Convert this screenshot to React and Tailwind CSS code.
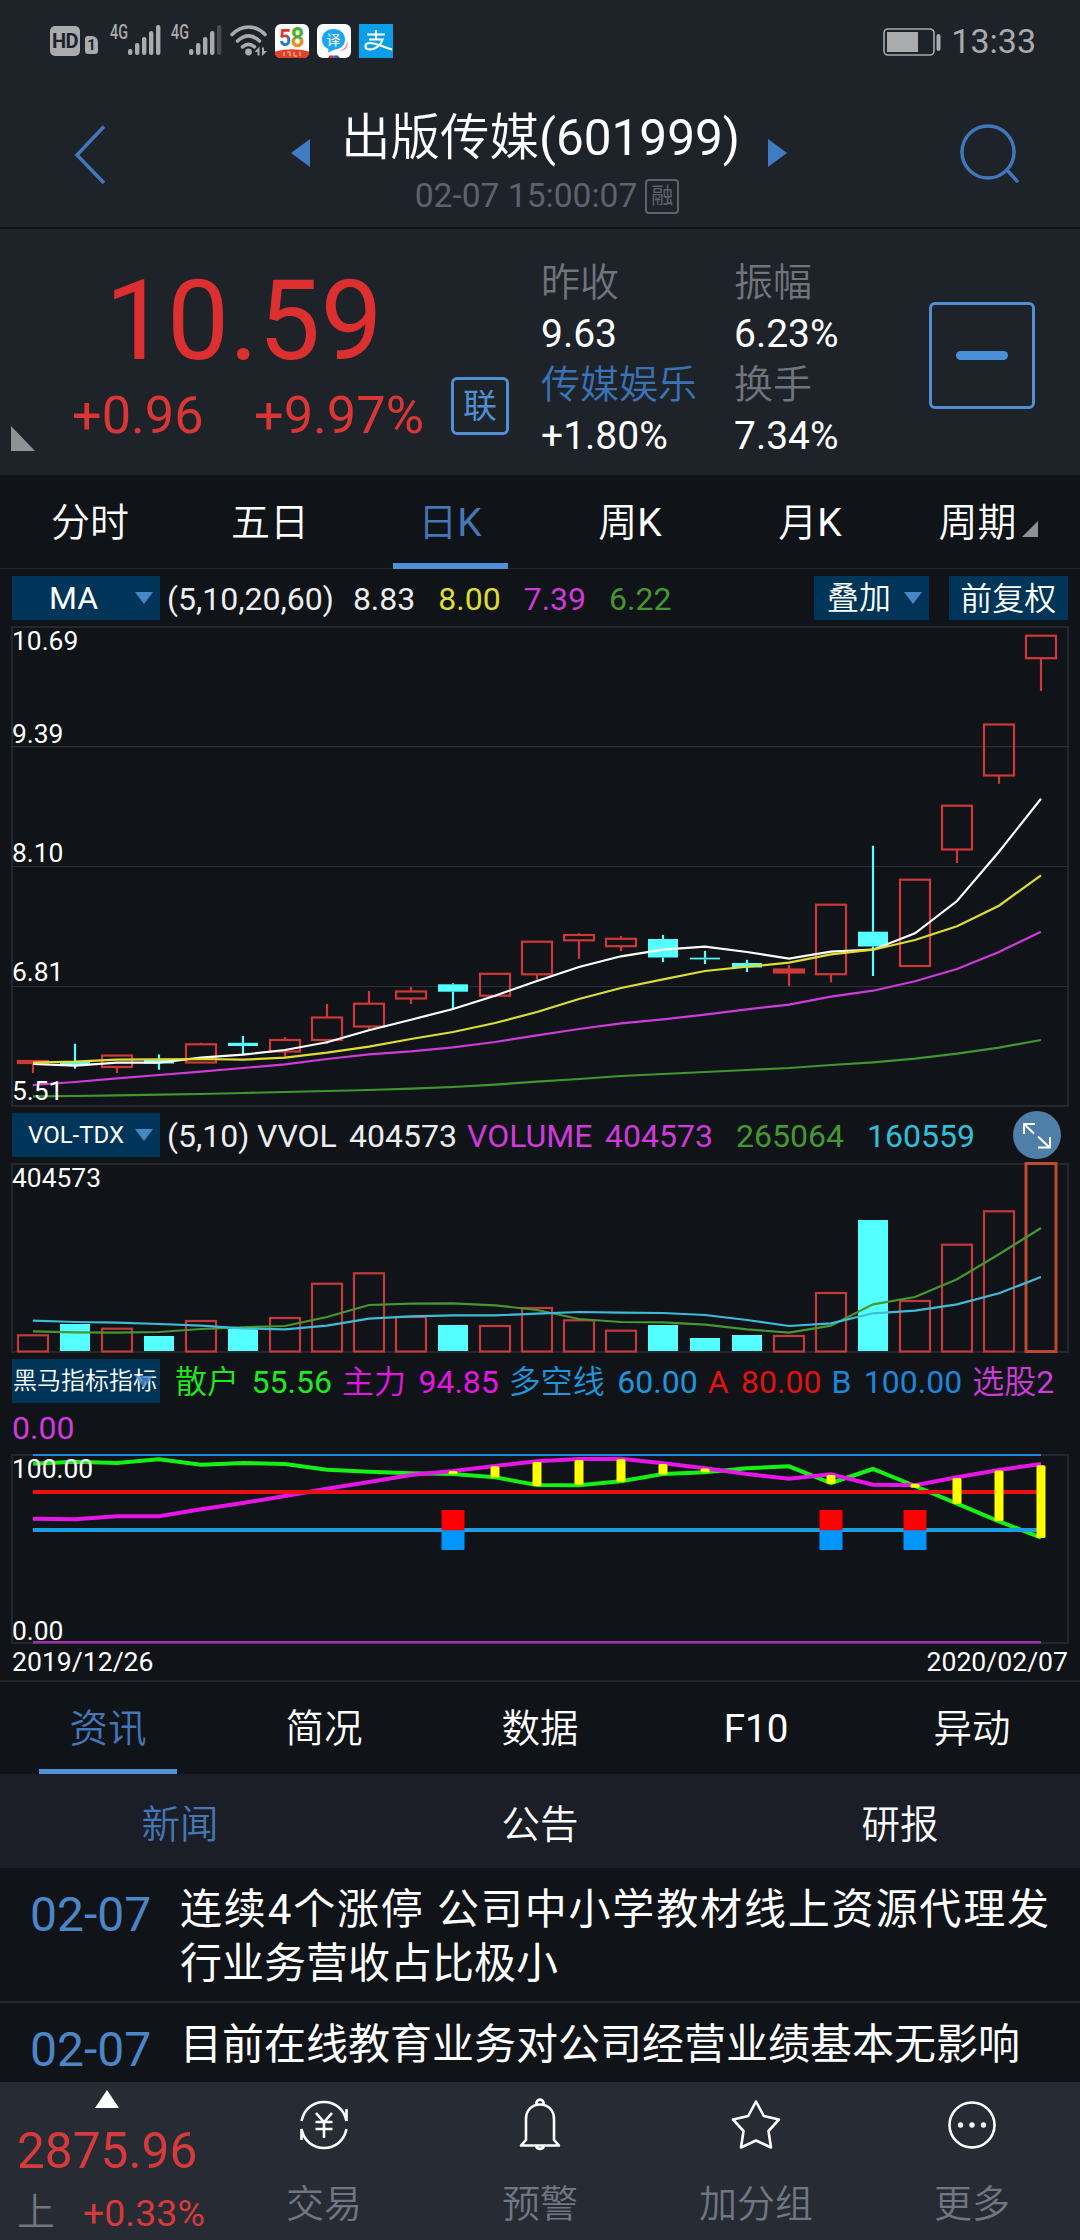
import React from "react";

const RED = "#cf3838";
const CYAN = "#54ffff";
const GRID = "#24272c";

const FIRST_X = 33;
const STEP = 42;
const cx = (i) => FIRST_X + STEP * i;

// [up, bodyTop, bodyBottom, high, low]
const candles = [
  [1, 1061, 1063, 1061, 1073],
  [0, 1061.5, 1065, 1043.7, 1068.7],
  [1, 1055.5, 1067, 1055, 1073],
  [0, 1060, 1063.5, 1054.5, 1069.7],
  [1, 1044.3, 1062.5, 1042.7, 1062],
  [0, 1042.8, 1046, 1036, 1054],
  [1, 1040, 1051.5, 1037, 1057.7],
  [1, 1017.5, 1040, 1004, 1044],
  [1, 1003.7, 1026.5, 991, 1030],
  [1, 991.5, 998.5, 987, 1004],
  [0, 984.3, 991.7, 983.3, 1008.7],
  [1, 973.8, 995.7, 973, 997.3],
  [1, 941.7, 974.3, 941, 979.5],
  [1, 935, 940.3, 933.3, 958.7],
  [1, 938.8, 946.2, 936, 951],
  [0, 939, 957.5, 935, 962],
  [0, 957.7, 959.4, 951, 964],
  [0, 963, 967.5, 959.7, 972],
  [1, 969.5, 972.5, 965, 986],
  [1, 904.7, 974.2, 904, 982.3],
  [0, 931.7, 946.5, 845.7, 976],
  [1, 879.7, 966, 879, 966],
  [1, 805.7, 849.5, 805, 863],
  [1, 724.5, 775.5, 724, 783.7],
  [1, 635.7, 658.2, 635, 691],
];

const averages = [
  {
    color: "#3f972f",
    ys: [1096.3, 1096, 1095.3, 1094.7, 1094, 1093, 1092, 1091, 1090, 1088.6, 1087, 1084.6, 1081.7, 1079, 1076, 1074, 1072, 1070, 1068, 1065, 1062.3, 1058.7, 1053.7, 1047.7, 1040],
  },
  {
    color: "#cf3adb",
    ys: [1085, 1082, 1078.3, 1075, 1071.7, 1068, 1064.3, 1059, 1054.3, 1051.3, 1047.3, 1042, 1035.3, 1029, 1023.3, 1019.3, 1014.7, 1009.3, 1004.7, 996.7, 990.7, 981.3, 969, 952, 931.7],
  },
  {
    color: "#fff",
    ys: [1064, 1065.7, 1062.7, 1062.7, 1057.7, 1054.7, 1050, 1042.3, 1030.3, 1019.7, 1009, 995.7, 981, 967, 956.3, 949.7, 946.7, 952, 958.7, 951.7, 949.7, 933.3, 901, 851.7, 798.7],
  },
  {
    color: "#dede30",
    ys: [1062.7, 1061.7, 1059.7, 1059.3, 1059, 1059.7, 1057.7, 1052.7, 1046.7, 1039, 1032, 1023, 1012, 999, 988, 979.3, 971, 966.7, 962.7, 954.3, 949.7, 940, 926.3, 905.7, 875.3],
  },
];

const volumes = [
  [1, 1335.3], [0, 1324], [1, 1328.7], [0, 1336], [1, 1321], [0, 1327.7], [1, 1318],
  [1, 1283.7], [1, 1273.3], [1, 1317], [0, 1325], [1, 1326], [1, 1308], [1, 1320.3],
  [1, 1330.7], [0, 1325], [0, 1338], [0, 1335], [1, 1336], [1, 1293], [0, 1220],
  [1, 1301], [1, 1244.7], [1, 1211.3], [1, 1163.5],
];

const volumeAverages = [
  {
    color: "#45982f",
    ys: [1331.3, 1332.3, 1332.7, 1332, 1329, 1327.3, 1326, 1317, 1305, 1303.7, 1303.3, 1305.3, 1310, 1319, 1322, 1322.3, 1324.7, 1329.3, 1332.7, 1325.7, 1304.3, 1297, 1279.3, 1254.3, 1228],
  },
  {
    color: "#3cbcd8",
    ys: [1320.7, 1322, 1322.7, 1324, 1325.7, 1328.3, 1329.3, 1325.7, 1318.7, 1316.3, 1315.3, 1315.3, 1313.7, 1312, 1312.7, 1313, 1315, 1320, 1326, 1323.3, 1313.3, 1310.7, 1304.3, 1293.3, 1277],
  },
];

const retail = [1463.7, 1461.7, 1463, 1459.3, 1464.7, 1463, 1464, 1469.7, 1471.7, 1473.3, 1474, 1477.3, 1485, 1485.3, 1481.3, 1474, 1472.3, 1468.3, 1466.3, 1483, 1469, 1486, 1503.7, 1521.3, 1537.7];
const mainForce = [1518.7, 1519.3, 1516.3, 1516.3, 1509.3, 1503, 1496, 1488.7, 1482, 1475, 1471, 1466, 1461.3, 1459, 1458.7, 1463.3, 1468.3, 1474, 1478.7, 1474.3, 1484.7, 1485.3, 1477.3, 1470, 1464];
const forceBars = [
  [10, 1471, 1474], [11, 1466.3, 1477.5], [12, 1462, 1486], [13, 1460, 1485], [14, 1459, 1481.7],
  [15, 1464, 1474.5], [16, 1468.5, 1472.3], [19, 1475, 1483.7], [21, 1483.7, 1487.7],
  [22, 1478, 1503.7], [23, 1470.5, 1521], [24, 1465.3, 1538],
];
const signals = [10, 19, 21];

const periods = ["分时", "五日", "日K", "周K", "月K", "周期"];
const infoTabs = ["资讯", "简况", "数据", "F10", "异动"];
const newsTabs = ["新闻", "公告", "研报"];

const points = (ys) => ys.map((y, i) => `${cx(i)},${y}`).join(" ");

const Line = ({ ys, color, width = 2.2 }) => (
  <polyline points={points(ys)} fill="none" stroke={color} strokeWidth={width} />
);

const Frame = ({ top, bottom }) => (
  <rect x="12" y={top} width="1056" height={bottom - top} fill="none" stroke={GRID} strokeWidth="2" />
);

const AxisLabel = ({ y, children }) => (
  <text x="12" y={y} fill="#fff" fontSize="26.4">
    {children}
  </text>
);

const Caret = () => (
  <svg width="18" height="12" viewBox="0 0 18 12" className="shrink-0">
    <path d="M0 0H18L9 12Z" fill="#4a86c5" />
  </svg>
);

const Signal = ({ weak }) => (
  <svg width="52" height="34" viewBox="0 0 52 34" fill="#a9abad">
    <text x="0" y="15" fontSize="20" fontWeight="500" textLength="18" lengthAdjust="spacingAndGlyphs">
      4G
    </text>
    {[25, 19, 13, 7, 1].map((y, i) => (
      <rect
        key={y}
        x={18 + i * 7}
        y={y}
        width="4.4"
        height={31 - y}
        rx="2"
        fill={weak && i === 4 ? "#484b50" : "#a9abad"}
      />
    ))}
  </svg>
);

const StatusBar = () => (
  <div className="flex h-[84px] items-start pt-6 pl-[50px] pr-[44px] text-[#a9abad]">
    <div className="mt-[2px] flex h-[30px] w-[30px] items-center justify-center rounded-[5px] bg-[#a9abad] text-[20px] leading-none font-bold tracking-[-0.5px] text-[#1e2229]">
      HD
    </div>
    <div className="mt-3 ml-[5px] flex h-[18px] w-[13px] items-center justify-center rounded-[3px] rounded-tr-[6px] bg-[#a9abad] text-[15px] leading-none font-bold text-[#1e2229]">
      1
    </div>
    <div className="ml-3">
      <Signal />
    </div>
    <div className="ml-[9px]">
      <Signal weak />
    </div>
    <svg width="38" height="34" viewBox="0 0 38 34" className="ml-[7px]" fill="none" stroke="#a9abad" strokeWidth="3.6" strokeLinecap="round">
      <path d="M2 10.5C12 0.5 25 0.5 35 10.5" />
      <path d="M7.5 17C15 10 22 10 29.5 17" />
      <path d="M12.5 22.8C16.5 19.5 20.5 19.5 24.5 22.8" />
      <circle cx="18.5" cy="28" r="3.4" fill="#a9abad" stroke="none" />
      <path d="M24.5 28L29.5 22.5V31.500H27.500V28ZM32 23.500H34V27H37L32 32Z" fill="#a9abad" stroke="none" />
    </svg>
    <svg width="34" height="34" viewBox="0 0 34 34" className="ml-[7px]">
      <defs>
        <linearGradient id="five" x1="0" y1="0" x2="0" y2="1">
          <stop offset="45%" stopColor="#e2362c" />
          <stop offset="50%" stopColor="#1b7cc4" />
        </linearGradient>
        <linearGradient id="eight" x1="0" y1="0" x2="0" y2="1">
          <stop offset="50%" stopColor="#4db02e" />
          <stop offset="56%" stopColor="#f28c1c" />
        </linearGradient>
      </defs>
      <rect width="34" height="34" rx="6" fill="#fff" />
      <text x="4" y="22" fontSize="24" fontWeight="700" fill="url(#five)" textLength="12" lengthAdjust="spacingAndGlyphs">5</text>
      <text x="15.5" y="23" fontSize="27" fontWeight="700" fill="url(#eight)" textLength="14" lengthAdjust="spacingAndGlyphs">8</text>
      <path d="M0 27.5Q17 23 34 27.5V28C34 32 32 34 28 34H6C2 34 0 32 0 28Z" fill="#e0402c" />
      <path d="M9 28V32M12 28H15V32M19 28V32H22M25 28V32" stroke="#ffd9a8" strokeWidth="1" fill="none" />
    </svg>
    <svg width="34" height="34" viewBox="0 0 34 34" className="ml-2">
      <rect width="34" height="34" rx="6" fill="#fff" />
      <path d="M22 27C27 26 30 22 30 17C32 22 29 27 22 27Z" fill="#ef7d92" />
      <path d="M16.5 5C23.5 5 28 9.5 28 15.5C28 21.5 23.5 25 18 25.5L11 28.5L11.5 25C7.5 23.5 5 20 5 15.5C5 9.5 9.5 5 16.5 5Z" fill="#1ba6f5" />
      <path d="M11 34L12.5 31.5H16.5V34Z" fill="#d8273b" />
      <path d="M16.5 34V31.5H21L23 34Z" fill="#2563b8" />
      <text x="16.5" y="20.5" fontSize="14" fill="#fff" textAnchor="middle">译</text>
    </svg>
    <svg width="34" height="34" viewBox="0 0 34 34" className="ml-2">
      <rect width="34" height="34" fill="#0b9fe8" />
      <g fill="none" stroke="#fff" strokeWidth="2.2">
        <path d="M8 10.5H26M17 6V15M10 15.5H23.5C22 21 16 25.5 11 25.5C5 25.5 5 19 11 19C17 19 24 23 33 25.5" />
      </g>
    </svg>
    <div className="ml-auto flex items-center pt-[2px]">
      <svg width="58" height="29" viewBox="0 0 58 29">
        <rect x="1" y="2" width="50" height="26" rx="4" fill="none" stroke="#a9abad" strokeWidth="1.6" />
        <rect x="4" y="5" width="31" height="20" fill="#a9abad" />
        <rect x="53.5" y="7" width="4" height="17" rx="2" fill="#a9abad" />
      </svg>
      <span className="ml-[10px] text-[34px] leading-[30px]">13:33</span>
    </div>
  </div>
);

const Header = () => (
  <div className="flex h-[145px] justify-between border-b-2 border-[#101318] pl-[73px] pr-[59px]">
    <svg width="34" height="60" viewBox="0 0 34 60" className="mt-10">
      <path d="M31 2.5L4 31L31 59" fill="none" stroke="#3f78bb" strokeWidth="3.5" />
    </svg>
    <div className="ml-3 flex flex-col items-center pt-[24px]">
      <div className="flex h-[60px] items-center">
        <svg width="19" height="28" viewBox="0 0 19 28" className="mt-[30px]">
          <path d="M19 0V28L0 14Z" fill="#3f7cc2" />
        </svg>
        <span className="mr-[28px] ml-[31px] text-[49.5px] leading-[60px] font-[350] text-white">
          出版传媒<span className="font-normal">(601999)</span>
        </span>
        <svg width="19" height="28" viewBox="0 0 19 28" className="mt-[30px]">
          <path d="M0 0V28L19 14Z" fill="#3f7cc2" />
        </svg>
      </div>
      <div className="mt-[10px] ml-4 flex items-center gap-2 text-[#5d636d]">
        <span className="text-[33.6px] leading-[36px]">02-07 15:00:07</span>
        <span className="flex h-[35px] w-[34px] items-center justify-center rounded-[4px] border-2 border-[#5d636d] text-[22px] leading-none">
          融
        </span>
      </div>
    </div>
    <svg width="62" height="62" viewBox="0 0 62 62" className="mt-10" fill="none" stroke="#3f78bb" strokeWidth="3.5">
      <circle cx="29" cy="28" r="26" />
      <path d="M48 46L58 57" strokeLinecap="round" />
    </svg>
  </div>
);

const Stat = ({ label, value, link }) => (
  <div className="h-[102px]">
    <div className={`pt-px leading-[51px] font-[350] ${link ? "text-[#3a72b4]" : "text-[#70747b]"}`}>{label}</div>
    <div className="leading-[50px] text-white">{value}</div>
  </div>
);

const Quote = () => (
  <div className="flex h-[246px]">
    <div className="relative w-[541px]">
      <div className="pt-[36px] pl-[105px] text-[110.5px] leading-[112px] text-[#dc3030]">10.59</div>
      <div className="flex items-center text-[52.3px] text-[#d93636]">
        <span className="ml-[72px] w-[182px] leading-[76px]">+0.96</span>
        <span className="w-[197px] leading-[76px]">+9.97%</span>
        <span className="mt-[-19px] flex h-[58px] w-[58px] items-center justify-center rounded-[6px] border-[3px] border-[#5190d0] text-[34px] leading-none text-[#5190d0]">
          联
        </span>
      </div>
      <svg width="24" height="25" viewBox="0 0 24 25" className="absolute top-[197px] left-[11px]">
        <path d="M0 0V25H24Z" fill="#8f9294" />
      </svg>
    </div>
    <div className="w-[193px] pt-[28px] text-[39px]">
      <Stat label="昨收" value="9.63" />
      <Stat label="传媒娱乐" value="+1.80%" link />
    </div>
    <div className="w-[195px] pt-[28px] text-[39px]">
      <Stat label="振幅" value="6.23%" />
      <Stat label="换手" value="7.34%" />
    </div>
    <div className="mt-[73px] flex h-[107px] w-[106px] items-center justify-center rounded-[6px] border-[3px] border-[#5190d0]">
      <div className="h-[9px] w-[52px] rounded-full bg-[#4a90d9]" />
    </div>
  </div>
);

const Periods = () => (
  <div className="flex h-[94px] border-b border-[#24272e] bg-[#101317]">
    {periods.map((p) => (
      <div
        key={p}
        className={`relative flex w-[180px] items-center justify-center pt-1 text-[39px] font-[350] ${
          p === "日K" ? "text-[#4377b5]" : "text-white"
        }`}
      >
        <span className={p === "周期" ? "-ml-[25px]" : ""}>
          {p[0]}
          <span className={p[1] === "K" ? "font-normal" : ""}>{p[1]}</span>
        </span>
        {p === "日K" && <span className="absolute bottom-[-1px] left-[33px] h-[6px] w-[115px] bg-[#4f90d6]" />}
        {p === "周期" && (
          <svg width="16" height="16" viewBox="0 0 16 16" className="absolute top-[46px] left-[122px]">
            <path d="M16 0V16H0Z" fill="#8f9294" />
          </svg>
        )}
      </div>
    ))}
  </div>
);

const MaRow = () => (
  <div className="flex h-[57px] pt-[7px] pl-3 text-[32px] leading-[46px]">
    <div className="flex h-[44px] w-[148px] items-center bg-[#00355a] pl-[37px] text-white">
      MA
      <span className="ml-auto mr-[7px]">
        <Caret />
      </span>
    </div>
    <span className="ml-[7px] text-[#eceef0]">(5,10,20,60)</span>
    <div className="ml-[19px] flex w-[461px] gap-[23px]">
      <span className="text-[#eceef0]">8.83</span>
      <span className="text-[#dede30]">8.00</span>
      <span className="text-[#cf3adb]">7.39</span>
      <span className="text-[#45982f]">6.22</span>
    </div>
    <div className="flex h-[44px] w-[115px] items-center justify-between bg-[#00355a] pr-[7px] pl-[13px] font-[350] text-white">
      叠加
      <Caret />
    </div>
    <div className="ml-5 h-[44px] w-[119px] bg-[#00355a] text-center font-[350] text-white">前复权</div>
  </div>
);

const PriceChart = () => (
  <svg width="1080" height="482" viewBox="0 626 1080 482" className="block">
    <Frame top={627} bottom={1106} />
    {[746.7, 866.5, 986.5].map((y) => (
      <path key={y} d={`M12 ${y}H1068`} stroke="#2c2f34" strokeWidth="1.2" />
    ))}
    {candles.map(([up, top, bottom, high, low], i) => {
      const color = up ? RED : CYAN;
      return (
        <g key={i} stroke={color} strokeWidth="2.2">
          <path d={`M${cx(i)} ${high}V${top}M${cx(i)} ${bottom}V${low}`} />
          {up ? (
            <rect x={cx(i) - 15} y={top} width="30" height={bottom - top} fill={bottom - top < 4 ? RED : "none"} />
          ) : (
            <rect x={cx(i) - 15} y={top} width="30" height={bottom - top} fill={CYAN} stroke="none" />
          )}
        </g>
      );
    })}
    {averages.map((a) => (
      <Line key={a.color} {...a} />
    ))}
    <AxisLabel y={650}>10.69</AxisLabel>
    <AxisLabel y={743}>9.39</AxisLabel>
    <AxisLabel y={862}>8.10</AxisLabel>
    <AxisLabel y={981}>6.81</AxisLabel>
    <AxisLabel y={1100}>5.51</AxisLabel>
  </svg>
);

const VolumeRow = () => (
  <div className="flex h-[54px] pt-[5px] pl-3 text-[32px] leading-[46px]">
    <div className="flex h-[44px] w-[148px] items-center justify-between bg-[#00355a] pr-[7px] pl-[16px] text-[24px] text-white">
      VOL-TDX
      <Caret />
    </div>
    <span className="ml-[7px] w-[90px] text-[#eceef0]">(5,10)</span>
    <span className="w-[92px] text-[#eceef0]">VVOL</span>
    <span className="w-[118px] text-[#eceef0]">404573</span>
    <span className="w-[138px] text-[#cf3adb]">VOLUME</span>
    <span className="w-[131px] text-[#cf3adb]">404573</span>
    <span className="w-[131px] text-[#45982f]">265064</span>
    <span className="w-[146px] text-[#2fc0dc]">160559</span>
    <svg width="48" height="48" viewBox="0 0 48 48" className="-mt-[2px]">
      <circle cx="24" cy="24" r="24" fill="#4f7fa8" />
      <path d="M11 23V13H22M11.500 13.500L21 22.500M25 25.500L36 36M37 26V36.500H25" fill="none" stroke="#fff" strokeWidth="2" />
    </svg>
  </div>
);

const VolumeChart = () => (
  <svg width="1080" height="192" viewBox="0 1162 1080 192" className="block">
    <Frame top={1164} bottom={1352} />
    {volumes.map(([up, top], i) =>
      up ? (
        <rect
          key={i}
          x={cx(i) - 15}
          y={top}
          width="30"
          height={1351.5 - top}
          fill="none"
          stroke={i === 24 ? "#bb4a30" : "#c43a3a"}
          strokeWidth={i === 24 ? 3 : 2.2}
        />
      ) : (
        <rect key={i} x={cx(i) - 15} y={top} width="30" height={1351 - top} fill={CYAN} />
      )
    )}
    {volumeAverages.map((a) => (
      <Line key={a.color} {...a} />
    ))}
    <AxisLabel y={1187}>404573</AxisLabel>
  </svg>
);

const Pair = ({ label, value, className }) => (
  <div className={`flex gap-[12.5px] ${className}`}>
    <span className="font-[350]">{label}</span>
    <span>{value}</span>
  </div>
);

const IndicatorRow = () => (
  <div className="h-[99px] pt-[5px] pl-3 text-[32px] leading-[46px]">
    <div className="flex whitespace-nowrap">
      <div className="relative flex h-[44px] w-[148px] items-center bg-[#00355a] pl-px text-[24px] font-[350] text-white">
        黑马指标指标
        <span className="absolute top-[17px] right-[7px] flex opacity-80">
          <Caret />
        </span>
      </div>
      <div className="ml-[15px] flex gap-[10px]">
        <Pair label="散户" value="55.56" className="text-[#1fea1f]" />
        <Pair label="主力" value="94.85" className="text-[#e416e4]" />
        <Pair label="多空线" value="60.00" className="text-[#1c97de]" />
        <Pair label={<span className="font-normal">A</span>} value="80.00" className="text-[#e01212]" />
        <Pair label={<span className="font-normal">B</span>} value="100.00" className="text-[#1a86dc]" />
        <span className="font-[350] text-[#cf3adb]">
          选股<span className="font-normal">2</span>
        </span>
      </div>
    </div>
    <div className="text-[#cf3adb]">0.00</div>
  </div>
);

const IndicatorChart = () => (
  <svg width="1080" height="192" viewBox="0 1453 1080 192" className="block">
    <Frame top={1455} bottom={1643} />
    <path d="M33 1455H1041" stroke="#2186de" strokeWidth="2" />
    <path d="M33 1642.3H1041" stroke="#a12fae" strokeWidth="2.4" />
    <Line ys={retail} color="#15f015" width={4} />
    <Line ys={mainForce} color="#e815e8" width={4} />
    <path d="M33 1492H1041" stroke="#ea1010" strokeWidth="4" />
    <path d="M33 1530H1041" stroke="#189fe6" strokeWidth="4" />
    {forceBars.map(([i, top, bottom]) => (
      <rect key={i} x={cx(i) - 4.5} y={top} width="9" height={bottom - top} rx="1.5" fill="#ff0" />
    ))}
    {signals.map((i) => (
      <g key={i}>
        <rect x={cx(i) - 11.5} y="1510" width="23" height="20.5" rx="1" fill="#f00" />
        <rect x={cx(i) - 11.5} y="1530.5" width="23" height="19.5" rx="1" fill="#0096ff" />
      </g>
    ))}
    <AxisLabel y={1478}>100.00</AxisLabel>
    <AxisLabel y={1640}>0.00</AxisLabel>
  </svg>
);

const InfoTabs = () => (
  <>
    <div className="flex h-[92px]">
      {infoTabs.map((t, i) => (
        <div
          key={t}
          className={`relative flex w-[216px] items-center justify-center pt-[2px] text-[38.5px] ${
            t === "F10" ? "font-normal" : "font-[350]"
          } ${i === 0 ? "text-[#4377b5]" : "text-white"}`}
        >
          {t}
          {i === 0 && <span className="absolute bottom-0 left-[39px] h-[5px] w-[138px] bg-[#4f90d6]" />}
        </div>
      ))}
    </div>
    <div className="flex h-[94px] bg-[#1b1e26]">
      {newsTabs.map((t, i) => (
        <div
          key={t}
          className={`flex w-[360px] items-center justify-center pt-[7px] text-[38.5px] font-[350] ${
            i === 0 ? "text-[#4377b5]" : "text-white"
          }`}
        >
          {t}
        </div>
      ))}
    </div>
  </>
);

const News = () => (
  <div className="h-[214px] overflow-hidden bg-[#101317]">
    <div className="flex h-[135px] border-b-2 border-[#24272e] pl-[30px]">
      <span className="w-[150px] pt-[17px] text-[48px] leading-[60px] text-[#4a86c8]">02-07</span>
      <div className="pt-[15px] text-[42px] leading-[54px] whitespace-nowrap text-white">
        <div className="tracking-[1.85px]">连续4个涨停 公司中小学教材线上资源代理发</div>
        <div>行业务营收占比极小</div>
      </div>
    </div>
    <div className="flex h-[135px] pl-[30px]">
      <span className="w-[150px] pt-[17px] text-[48px] leading-[60px] text-[#4a86c8]">02-07</span>
      <div className="pt-[14px] text-[42px] leading-[55px] whitespace-nowrap text-white">
        目前在线教育业务对公司经营业绩基本无影响
      </div>
    </div>
  </div>
);

const NavItem = ({ label, children }) => (
  <div className="flex w-[216px] flex-col items-center pt-4">
    <svg width="54" height="54" viewBox="0 0 54 54" fill="none" stroke="#fff" strokeWidth="2.6">
      {children}
    </svg>
    <span className="mt-[26px] text-[38px] leading-[52px] font-[350] text-[#717782]">{label}</span>
  </div>
);

const BottomBar = () => (
  <div className="flex h-[158px] bg-[#272b34]">
    <div className="w-[216px] pt-2">
      <svg width="24" height="18" viewBox="0 0 24 18" className="ml-[95px] block">
        <path d="M12 0L24 18H0Z" fill="#fff" />
      </svg>
      <div className="pt-[15px] pl-[17px] text-[49.6px] leading-[56px] text-[#d63a3c]">2875.96</div>
      <div className="flex items-center pt-[2px] pl-[17px] leading-[60px]">
        <span className="w-[66px] text-[38px] font-[350] text-[#717782]">上</span>
        <span className="pt-[2px] text-[37.5px] text-[#d63a3c]">+0.33%</span>
      </div>
    </div>
    <NavItem label="交易">
      <path d="M4.5 23C7 11 16 4 27 4C38 4 47 11 49.5 23V11" />
      <path d="M49.5 31C47 43 38 50 27 50C16 50 7 43 4.5 31V42" />
      <path d="M19 15L27 24L35 15M18.5 24H35.5M18.5 31H35.5M27 24V40" />
    </NavItem>
    <NavItem label="预警">
      <path d="M24 7A3.5 3.5 0 1 1 30 7M27 6.5C18 6.5 13 13 13 21V42L8 47.5H46L41 42V21C41 13 36 6.5 27 6.5ZM23 48A4.2 4.2 0 0 0 31 48" strokeLinejoin="round" />
    </NavItem>
    <NavItem label="加分组">
      <path d="M27 3.5L34.8 18L50 21.5L39.5 33L42 49.5L27 42.5L12 49.5L14.5 33L4 21.5L19.2 18Z" strokeLinejoin="round" />
    </NavItem>
    <NavItem label="更多">
      <circle cx="27" cy="27" r="22.5" />
      <g fill="#fff" stroke="none">
        <circle cx="15.5" cy="27" r="2.7" />
        <circle cx="27" cy="27" r="2.7" />
        <circle cx="38.5" cy="27" r="2.7" />
      </g>
    </NavItem>
  </div>
);

const App = () => {
  return (
    <div className="h-[2240px] w-[1080px] overflow-hidden bg-[#1e2229] font-[Roboto,'Noto_Sans_CJK_SC',sans-serif]">
      <StatusBar />
      <Header />
      <Quote />
      <Periods />
      <div className="bg-[#101317]">
        <MaRow />
        <PriceChart />
        <VolumeRow />
        <VolumeChart />
        <IndicatorRow />
        <IndicatorChart />
        <div className="flex h-[37px] justify-between border-b-2 border-[#22252d] px-3 text-[26.6px] leading-[34px] text-white">
          <span>2019/12/26</span>
          <span>2020/02/07</span>
        </div>
        <InfoTabs />
      </div>
      <News />
      <BottomBar />
    </div>
  );
};

export default App;
